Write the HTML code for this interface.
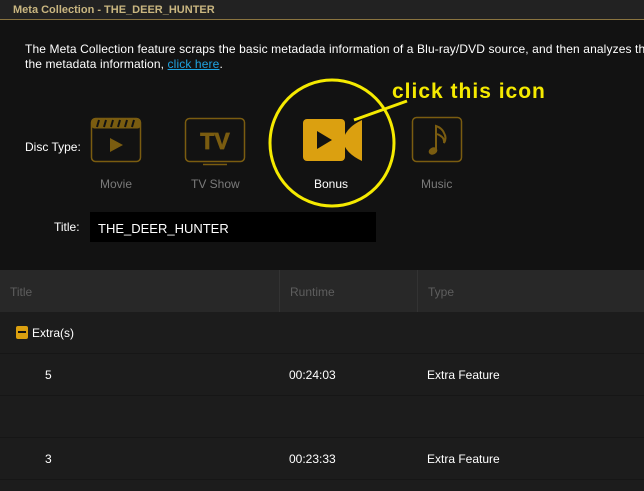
<!DOCTYPE html>
<html><head><style>
*{margin:0;padding:0;box-sizing:border-box}
body{width:644px;height:491px;background:#121212;font-family:"Liberation Sans",sans-serif;position:relative;overflow:hidden;color:#fff}
.abs{position:absolute;white-space:nowrap}
.bar{left:0;top:0;width:644px;height:20px;background:#222;border-bottom:1px solid #8a7440}
.lbl{font-size:12px;color:#fff}
.gray{font-size:12px;color:#7a7a7a}
</style></head><body>
<div class="abs bar"></div>
<div class="abs" style="left:13px;top:4px;font-size:11px;font-weight:bold;color:#c9b680">Meta Collection - THE_DEER_HUNTER</div>
<div class="abs lbl" style="left:25px;top:42px;line-height:15px;letter-spacing:0.12px">The Meta Collection feature scraps the basic metadada information of a Blu-ray/DVD source, and then analyzes the<br>the metadata information, <span style="color:#1fa3e0;text-decoration:underline">click here</span>.</div>
<div class="abs lbl" style="left:25px;top:140px">Disc Type:</div>

<svg class="abs" style="left:0;top:0" width="644" height="260">
 <rect x="91.5" y="118.5" width="49" height="43" rx="4" fill="none" stroke="#7a5c10" stroke-width="1.5"/>
 <rect x="91.5" y="118.5" width="49" height="10" rx="3" fill="#7a5c10"/>
 <g stroke="#121212" stroke-width="2"><line x1="97" y1="127" x2="99" y2="120"/><line x1="104" y1="127" x2="106" y2="120"/><line x1="111" y1="127" x2="113" y2="120"/><line x1="118" y1="127" x2="120" y2="120"/><line x1="125" y1="127" x2="127" y2="120"/><line x1="132" y1="127" x2="134" y2="120"/></g>
 <polygon points="110,138 123,145 110,152" fill="#7a5c10"/>
 <rect x="185.5" y="118.5" width="59" height="43" rx="4" fill="none" stroke="#7a5c10" stroke-width="1.5"/>
 <text x="215" y="149" text-anchor="middle" font-family="Liberation Sans" font-weight="bold" font-size="23" fill="#7a5c10" stroke="#7a5c10" stroke-width="0.8">TV</text>
 <line x1="203" y1="164.5" x2="227" y2="164.5" stroke="#7a5c10" stroke-width="1.5"/>
 <rect x="303" y="119" width="42" height="42" rx="4" fill="#dba010"/>
 <polygon points="317,131 332,140 317,149" fill="#121212"/>
 <path d="M362,120 L362,161 Q345,153 343,141 Q345,128 362,120 Z" fill="#dba010"/>
 <rect x="412.5" y="117.5" width="49" height="44" rx="4" fill="none" stroke="#7a5c10" stroke-width="1.5"/>
 <ellipse cx="433" cy="151" rx="4.5" ry="3.5" fill="#7a5c10" transform="rotate(-25 433 151)"/>
 <path d="M436,150 L436,126 Q442,128 444,133 Q447,138 444,143 Q445,137 437,134" fill="none" stroke="#7a5c10" stroke-width="2"/>
 <ellipse cx="332" cy="143" rx="62" ry="63" fill="none" stroke="#f5ea00" stroke-width="3"/>
 <line x1="354" y1="120" x2="407" y2="101" stroke="#f5ea00" stroke-width="3"/>
 <text x="392" y="98" font-family="Liberation Sans" font-weight="bold" font-size="21" letter-spacing="1" fill="#f5ea00">click this icon</text>
</svg>
<div class="abs gray" style="left:100px;top:177px">Movie</div>
<div class="abs gray" style="left:191px;top:177px">TV Show</div>
<div class="abs lbl" style="left:314px;top:177px">Bonus</div>
<div class="abs gray" style="left:421px;top:177px">Music</div>

<div class="abs lbl" style="left:54px;top:220px">Title:</div>
<div class="abs" style="left:90px;top:212px;width:286px;height:30px;background:#000"></div>
<div class="abs lbl" style="left:98px;top:221px;font-size:13px">THE_DEER_HUNTER</div>

<div class="abs" style="left:0;top:270px;width:644px;height:42px;background:#282828"></div>
<div class="abs" style="left:279px;top:270px;width:1px;height:42px;background:#333"></div>
<div class="abs" style="left:417px;top:270px;width:1px;height:42px;background:#333"></div>
<div class="abs" style="left:10px;top:285px;font-size:12px;color:#5e5e5e">Title</div>
<div class="abs" style="left:290px;top:285px;font-size:12px;color:#5e5e5e">Runtime</div>
<div class="abs" style="left:428px;top:285px;font-size:12px;color:#5e5e5e">Type</div>

<div class="abs" style="left:0;top:312px;width:644px;height:179px;background:#1c1c1c"></div>
<div class="abs" style="left:0;top:353px;width:644px;height:1px;background:#161616"></div>
<div class="abs" style="left:0;top:395px;width:644px;height:1px;background:#161616"></div>
<div class="abs" style="left:0;top:437px;width:644px;height:1px;background:#161616"></div>
<div class="abs" style="left:0;top:479px;width:644px;height:1px;background:#161616"></div>

<div class="abs" style="left:16px;top:326px;width:12px;height:13px;background:#dba010;border-radius:2px"></div>
<div class="abs" style="left:18px;top:331px;width:8px;height:2px;background:#121212"></div>
<div class="abs lbl" style="left:32px;top:326px">Extra(s)</div>

<div class="abs lbl" style="left:45px;top:368px">5</div>
<div class="abs lbl" style="left:289px;top:368px">00:24:03</div>
<div class="abs lbl" style="left:427px;top:368px">Extra Feature</div>
<div class="abs lbl" style="left:45px;top:452px">3</div>
<div class="abs lbl" style="left:289px;top:452px">00:23:33</div>
<div class="abs lbl" style="left:427px;top:452px">Extra Feature</div>
</body></html>
